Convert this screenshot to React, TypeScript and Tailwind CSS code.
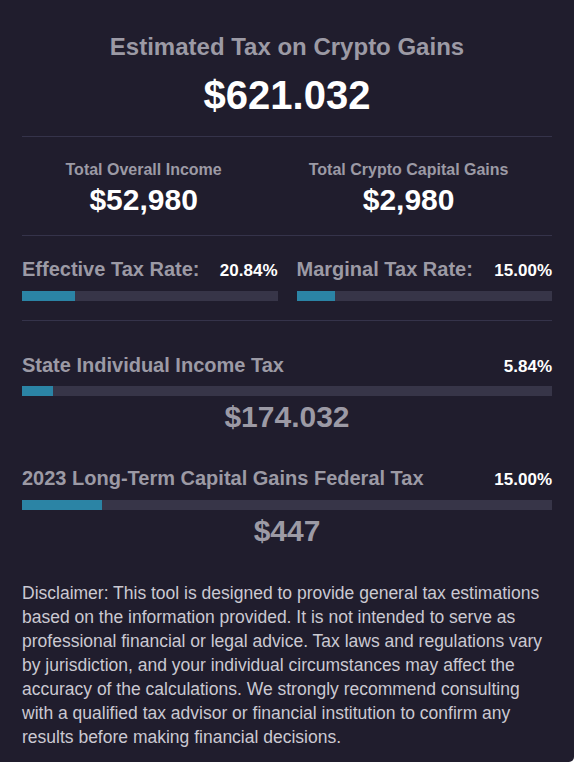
const font = { fontFamily: '"Liberation Sans", Arial, sans-serif' };

function Bar({ pct }: { pct: number }) {
  return (
    <div className="h-[10px] w-full bg-[#373548]">
      <div className="h-full bg-[#2b84a5]" style={{ width: `${pct}%` }} />
    </div>
  );
}

function RateCol({ label, pct }: { label: string; pct: number }) {
  return (
    <div>
      <div className="flex items-baseline justify-between">
        <span className="text-[20px] leading-[28px] font-bold text-[#9c9aa5]">{label}</span>
        <span className="text-[17px] font-bold text-white">{pct.toFixed(2)}%</span>
      </div>
      <div className="mt-[7px]">
        <Bar pct={pct} />
      </div>
    </div>
  );
}

function TaxBlock({ label, pct, amount }: { label: string; pct: number; amount: string }) {
  return (
    <div>
      <div className="flex items-baseline justify-between">
        <span className="text-[20px] leading-[28px] font-bold text-[#9c9aa5]">{label}</span>
        <span className="text-[17px] font-bold text-white">{pct.toFixed(2)}%</span>
      </div>
      <div className="mt-[7px]">
        <Bar pct={pct} />
      </div>
      <div className="mt-[3px] text-center text-[30px] leading-[36px] font-bold text-[#9c9aa5]">{amount}</div>
    </div>
  );
}

export default function App() {
  return (
    <div className="bg-white" style={font}>
      <div className="h-[762px] w-[574px] overflow-hidden rounded-br-[5px] bg-[#201d2d] px-[22px]">
        <div className="pt-[31px] pb-[17px] text-center">
          <h1 className="text-[24px] leading-[32px] font-bold text-[#9c9aa5]">Estimated Tax on Crypto Gains</h1>
          <div className="mt-2 text-[40px] leading-[48px] font-bold text-white">$621.032</div>
        </div>
        <div className="h-px bg-[#35334a]" />

        <div className="flex justify-around pt-[21px] pb-[17px] text-center">
          <div>
            <div className="text-[16px] leading-[24px] font-bold text-[#9c9aa5]">Total Overall Income</div>
            <div className="text-[30px] leading-[36px] font-bold text-white">$52,980</div>
          </div>
          <div>
            <div className="text-[16px] leading-[24px] font-bold text-[#9c9aa5]">Total Crypto Capital Gains</div>
            <div className="text-[30px] leading-[36px] font-bold text-white">$2,980</div>
          </div>
        </div>
        <div className="h-px bg-[#35334a]" />

        <div className="grid grid-cols-2 gap-[19px] pt-[19px] pb-[19px]">
          <RateCol label="Effective Tax Rate:" pct={20.84} />
          <RateCol label="Marginal Tax Rate:" pct={15} />
        </div>
        <div className="h-px bg-[#35334a]" />

        <div className="flex flex-col gap-[29px] pt-[30px]">
          <TaxBlock label="State Individual Income Tax" pct={5.84} amount="$174.032" />
          <TaxBlock label="2023 Long-Term Capital Gains Federal Tax" pct={15} amount="$447" />
        </div>

        <p className="mt-[32px] text-[17.5px] leading-[24px] text-[#cbc9d2]">
          Disclaimer: This tool is designed to provide general tax estimations based on the information provided. It
          is not intended to serve as professional financial or legal advice. Tax laws and regulations vary by
          jurisdiction, and your individual circumstances may affect the accuracy of the calculations. We strongly
          recommend consulting with a qualified tax advisor or financial institution to confirm any results before
          making financial decisions.
        </p>
      </div>
    </div>
  );
}
